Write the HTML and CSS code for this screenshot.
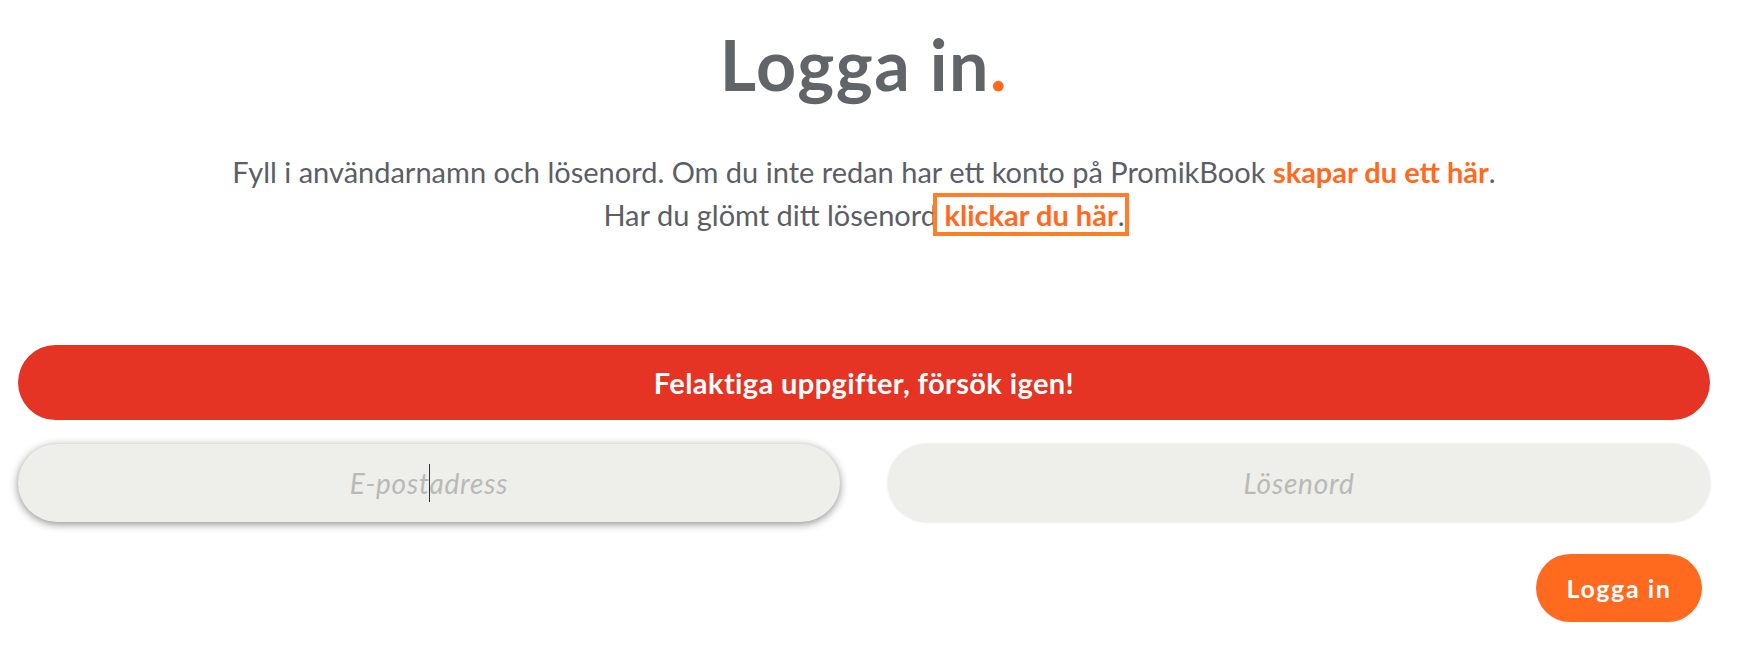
FILE: index.html
```html
<!DOCTYPE html>
<html lang="sv">
<head>
<meta charset="utf-8">
<title>Logga in</title>
<link rel="stylesheet" href="styles.css">
</head>
<body>
<main class="page">
  <h1 class="title">Logga in<span class="dot">.</span></h1>
  <p class="intro">Fyll i användarnamn och lösenord. Om du inte redan har ett konto på PromikBook <a class="link" href="#">skapar du ett här</a>.<br>Har du glömt ditt lösenord<span class="focus-ring"> <a class="link" href="#">klickar du här</a>.</span></p>
  <div class="alert">Felaktiga uppgifter, försök igen!</div>
  <div class="fields">
    <div class="field is-focused"><input class="input" type="text" placeholder="E-postadress"></div>
    <div class="field"><input class="input" type="password" placeholder="Lösenord"></div>
  </div>
  <div class="actions"><button class="btn" type="button">Logga in</button></div>
</main>
</body>
</html>
```
FILE: styles.css
```css
html, body {
  margin: 0;
  padding: 0;
  background: #ffffff;
}
body {
  font-family: Lato, "Noto Sans", sans-serif;
  color: #5b5e64;
}
.page {
  padding: 0 36px 0 18px;
}
.title {
  margin: 22px 0 0;
  font-size: 70px;
  line-height: 1.2;
  font-weight: 700;
  letter-spacing: 1.5px;
  color: #616469;
  text-align: center;
}
.dot {
  color: #ff6a1f;
}
.intro {
  margin: 44px 0 0;
  font-size: 29px;
  line-height: 43px;
  text-align: center;
  color: #5b5e64;
}
.link {
  color: #ff6a1f;
  font-weight: 700;
  text-decoration: none;
}
.focus-ring {
  outline: 4px solid #ff7d2b;
  outline-offset: 0;
}
.alert {
  margin-top: 109px;
  height: 75px;
  border-radius: 38px;
  background: #e53324;
  color: #ffffff;
  font-weight: 700;
  font-size: 29px;
  letter-spacing: 0.4px;
  display: flex;
  align-items: center;
  justify-content: center;
}
.fields {
  margin-top: 24px;
  display: grid;
  grid-template-columns: 1fr 1fr;
  gap: 48px;
}
.field {
  position: relative;
}
.input {
  display: block;
  box-sizing: border-box;
  width: 100%;
  height: 78px;
  border: none;
  border-radius: 40px;
  background: #eeeeea;
  font-family: Lato, "Noto Sans", sans-serif;
  font-size: 28px;
  letter-spacing: 0.8px;
  text-align: center;
  color: #5b5e64;
  outline: none;
  caret-color: transparent;
  box-shadow: 0 0 3px rgba(0, 0, 0, 0.14);
}
.input::placeholder {
  font-style: italic;
  color: #b9b9b7;
}
.is-focused .input {
  box-shadow: 0 2px 8px rgba(0, 0, 0, 0.45);
}
.is-focused::after {
  content: "";
  position: absolute;
  left: 50%;
  top: 20px;
  width: 1px;
  height: 38px;
  background: #333333;
}
.actions {
  margin-top: 32px;
  padding-right: 8px;
  display: flex;
  justify-content: flex-end;
}
.btn {
  width: 166px;
  height: 68px;
  border: none;
  border-radius: 34px;
  background: #ff6a1f;
  color: #ffffff;
  font-family: Lato, "Noto Sans", sans-serif;
  font-weight: 700;
  font-size: 25px;
  letter-spacing: 1.6px;
}
```
